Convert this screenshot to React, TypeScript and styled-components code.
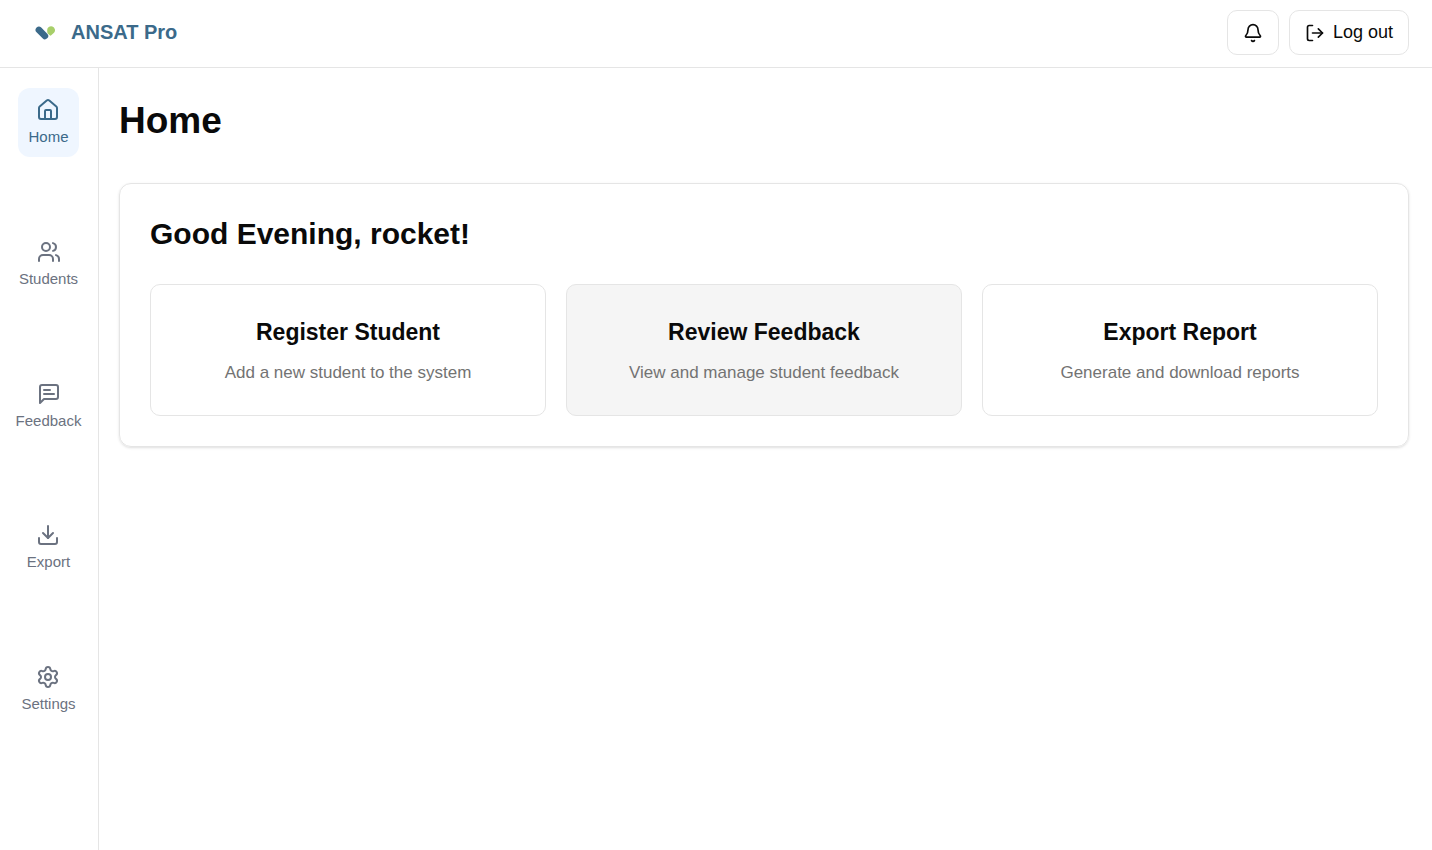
import React from "react";
import styled, { createGlobalStyle } from "styled-components";
import { Bell, Download, House, LogOut, Settings, Users } from "lucide-react";

const Global = createGlobalStyle`
  * { box-sizing: border-box; }
  body {
    margin: 0;
    background: #fff;
    color: #0a0a0a;
    font-family: "Liberation Sans", Arial, sans-serif;
  }
  h1, h2, h3, p { margin: 0; }
`;

const Page = styled.div`
  min-height: 100vh;
  display: flex;
  flex-direction: column;
`;

const Header = styled.header`
  display: flex;
  align-items: center;
  justify-content: space-between;
  padding: 10px 23px 12px 35px;
  border-bottom: 1px solid #e5e5e5;
`;

const Brand = styled.a`
  display: flex;
  align-items: center;
  gap: 16px;
  padding-bottom: 2px;
  color: #3b6a8a;
  font-size: 20px;
  line-height: 28px;
  font-weight: 700;
  text-decoration: none;
`;

const Actions = styled.div`
  display: flex;
  gap: 10px;
`;

const OutlineButton = styled.button`
  display: flex;
  align-items: center;
  gap: 8px;
  height: 45px;
  padding: 0 15px;
  border: 1px solid #e5e5e5;
  border-radius: 10px;
  background: #fff;
  color: #0a0a0a;
  font: 18px/25px "Liberation Sans", Arial, sans-serif;
`;

const Body = styled.div`
  flex: 1;
  display: flex;
`;

const Sidebar = styled.nav`
  flex: none;
  width: 99px;
  display: flex;
  flex-direction: column;
  align-items: center;
  justify-content: space-between;
  padding: 20px 1px 126px 0;
  border-right: 1px solid #e5e5e5;
`;

const NavLink = styled.a<{ $active?: boolean }>`
  display: flex;
  flex-direction: column;
  align-items: center;
  gap: 5px;
  height: 69px;
  padding: 10px;
  border-radius: 12px;
  background: ${(p) => (p.$active ? "#eff6ff" : "transparent")};
  color: ${(p) => (p.$active ? "#3b6a8a" : "#6b7280")};
  font-size: 15px;
  line-height: 20px;
  text-decoration: none;
`;

const Main = styled.main`
  flex: 1;
  min-width: 0;
  padding: 30px 23px 30px 20px;
`;

const Title = styled.h1`
  font-size: 37px;
  line-height: 45px;
  font-weight: 700;
`;

const Panel = styled.section`
  margin-top: 40px;
  padding: 30px;
  border: 1px solid #e5e5e5;
  border-radius: 12px;
  box-shadow: 0 1px 3px rgba(0, 0, 0, 0.1), 0 1px 2px -1px rgba(0, 0, 0, 0.1);
`;

const Greeting = styled.h2`
  font-size: 30px;
  line-height: 40px;
  font-weight: 700;
`;

const Cards = styled.div`
  display: grid;
  grid-template-columns: repeat(3, 1fr);
  gap: 20px;
  margin-top: 30px;
`;

const Card = styled.button<{ $hovered?: boolean }>`
  display: flex;
  flex-direction: column;
  align-items: center;
  gap: 10px;
  padding: 30px;
  border: 1px solid #e5e5e5;
  border-radius: 10px;
  background: ${(p) => (p.$hovered ? "#f5f5f5" : "#fff")};
  font-family: inherit;
  color: #0a0a0a;
`;

const CardTitle = styled.span`
  font-size: 23px;
  line-height: 35px;
  font-weight: 700;
`;

const CardText = styled.span`
  font-size: 17px;
  line-height: 25px;
  color: #737373;
`;

const LogoMark = () => (
  <svg width="20" height="16" viewBox="0 -2 20 16" aria-hidden="true">
    <path d="M3.900 3.900 9.900 10" stroke="#3b6a8a" strokeWidth="6.600" strokeLinecap="round" />
    <path d="M12.700 7.400C12.200 6.500 12.200 5 12.200 4.300A3.900 3.900 0 1 1 19 6.700L16.200 9.300Q15.400 10 14.700 9.200Z" fill="#a8cf6a" />
  </svg>
);

const FeedbackIcon = ({ size }: { size?: number }) => (
  <svg width={size} height={size} viewBox="0 0 24 24" fill="none" stroke="currentColor" strokeWidth="2" strokeLinecap="round" strokeLinejoin="round" aria-hidden="true">
    <path d="M21 15a2 2 0 0 1-2 2H7l-4 4V5a2 2 0 0 1 2-2h14a2 2 0 0 1 2 2z" />
    <path d="M13 8H7" />
    <path d="M17 12H7" />
  </svg>
);

const navItems: { label: string; Icon: React.ComponentType<{ size?: number }> }[] = [
  { label: "Home", Icon: House },
  { label: "Students", Icon: Users },
  { label: "Feedback", Icon: FeedbackIcon },
  { label: "Export", Icon: Download },
  { label: "Settings", Icon: Settings },
];

const cards = [
  { title: "Register Student", text: "Add a new student to the system" },
  { title: "Review Feedback", text: "View and manage student feedback", hovered: true },
  { title: "Export Report", text: "Generate and download reports" },
];

export default function App() {
  return (
    <Page>
      <Global />
      <Header>
        <Brand href="#home">
          <LogoMark />
          ANSAT Pro
        </Brand>
        <Actions>
          <OutlineButton type="button" aria-label="Notifications">
            <Bell size={20} />
          </OutlineButton>
          <OutlineButton type="button">
            <LogOut size={20} />
            Log out
          </OutlineButton>
        </Actions>
      </Header>
      <Body>
        <Sidebar aria-label="Main">
          {navItems.map(({ label, Icon }, i) => (
            <NavLink key={label} href={"#" + label.toLowerCase()} $active={i === 0}>
              <Icon size={24} />
              {label}
            </NavLink>
          ))}
        </Sidebar>
        <Main>
          <Title>Home</Title>
          <Panel>
            <Greeting>Good Evening, rocket!</Greeting>
            <Cards>
              {cards.map((c) => (
                <Card key={c.title} type="button" $hovered={c.hovered}>
                  <CardTitle>{c.title}</CardTitle>
                  <CardText>{c.text}</CardText>
                </Card>
              ))}
            </Cards>
          </Panel>
        </Main>
      </Body>
    </Page>
  );
}
